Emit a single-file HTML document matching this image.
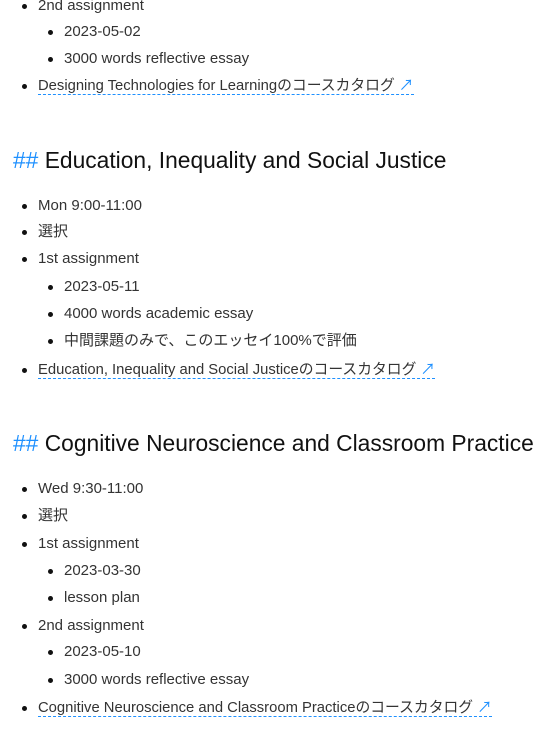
<!DOCTYPE html>
<html><head><meta charset="utf-8"><style>
html,body{margin:0;padding:0;background:#fff;width:542px;height:740px;overflow:hidden;position:relative}
body{font-family:"Liberation Sans","Noto Sans CJK JP",sans-serif;color:#333;font-size:15px}
.l{position:absolute;line-height:20px;white-space:nowrap}
.l::before{content:"";position:absolute;left:-16px;top:8px;width:5px;height:5px;border-radius:50%;background:#111}
.a{left:38px}.b{left:64px}
.lk{color:#333;text-decoration:none;border-bottom:1px dashed #1e90ff;font-size:14.8px}
.ar{color:#1e90ff}
.h{position:absolute;left:13px;font-size:22.8px;line-height:28px;color:#111;white-space:nowrap}
.h span{color:#1e90ff}
</style></head><body>
<div class="l a" style="top:-4px">2nd assignment</div>
<div class="l b" style="top:22px">2023-05-02</div>
<div class="l b" style="top:49px">3000 words reflective essay</div>
<div class="l a" style="top:76px"><span class="lk">Designing Technologies for Learningのコースカタログ <span class="ar">↗</span></span></div>
<div class="h" style="top:146px"><span>##</span> Education, Inequality and Social Justice</div>
<div class="l a" style="top:196px">Mon 9:00-11:00</div>
<div class="l a" style="top:222px">選択</div>
<div class="l a" style="top:249px">1st assignment</div>
<div class="l b" style="top:277px">2023-05-11</div>
<div class="l b" style="top:304px">4000 words academic essay</div>
<div class="l b" style="top:331px">中間課題のみで、このエッセイ100%で評価</div>
<div class="l a" style="top:360px"><span class="lk">Education, Inequality and Social Justiceのコースカタログ <span class="ar">↗</span></span></div>
<div class="h" style="top:429px"><span>##</span> Cognitive Neuroscience and Classroom Practice</div>
<div class="l a" style="top:479px">Wed 9:30-11:00</div>
<div class="l a" style="top:506px">選択</div>
<div class="l a" style="top:534px">1st assignment</div>
<div class="l b" style="top:561px">2023-03-30</div>
<div class="l b" style="top:588px">lesson plan</div>
<div class="l a" style="top:616px">2nd assignment</div>
<div class="l b" style="top:642px">2023-05-10</div>
<div class="l b" style="top:670px">3000 words reflective essay</div>
<div class="l a" style="top:698px"><span class="lk">Cognitive Neuroscience and Classroom Practiceのコースカタログ <span class="ar">↗</span></span></div>
</body></html>
